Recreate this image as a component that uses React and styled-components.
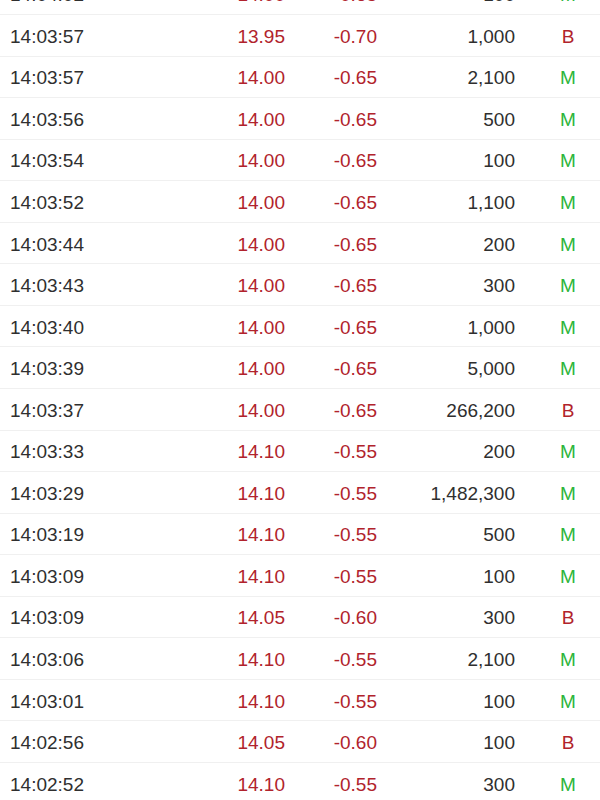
import React from "react";
import styled, { createGlobalStyle } from "styled-components";

const Global = createGlobalStyle`
  html, body { margin: 0; padding: 0; background: #fff; }
  body { overflow: hidden; font-family: "Liberation Sans", Arial, sans-serif; }
`;

const Viewport = styled.div`
  width: 600px;
  height: 800px;
  overflow: hidden;
  background: #fff;
`;

const List = styled.div`
  margin-top: -26.5px;
  display: flex;
  flex-direction: column;
`;

const Row = styled.div`
  box-sizing: border-box;
  height: 41.55px;
  display: grid;
  grid-template-columns: 1fr 90px 92px 138px 85px;
  align-items: center;
  padding-left: 10px;
  padding-top: 3px;
  border-bottom: 1px solid #f0f0f0;
  font-size: 19px;
  color: #2f2f2f;
`;

const Time = styled.div`
  text-align: left;
`;

const Num = styled.div`
  text-align: right;
  color: ${(p) => (p.$red ? "#b1232c" : "#2f2f2f")};
`;

const Type = styled.div`
  text-align: center;
  padding-left: 21px;
  color: ${(p) => (p.$t === "B" ? "#b1232c" : "#2cb53a")};
`;

const rows = [
  ["14:04:02", "14.00", "-0.65", "100", "M"],
  ["14:03:57", "13.95", "-0.70", "1,000", "B"],
  ["14:03:57", "14.00", "-0.65", "2,100", "M"],
  ["14:03:56", "14.00", "-0.65", "500", "M"],
  ["14:03:54", "14.00", "-0.65", "100", "M"],
  ["14:03:52", "14.00", "-0.65", "1,100", "M"],
  ["14:03:44", "14.00", "-0.65", "200", "M"],
  ["14:03:43", "14.00", "-0.65", "300", "M"],
  ["14:03:40", "14.00", "-0.65", "1,000", "M"],
  ["14:03:39", "14.00", "-0.65", "5,000", "M"],
  ["14:03:37", "14.00", "-0.65", "266,200", "B"],
  ["14:03:33", "14.10", "-0.55", "200", "M"],
  ["14:03:29", "14.10", "-0.55", "1,482,300", "M"],
  ["14:03:19", "14.10", "-0.55", "500", "M"],
  ["14:03:09", "14.10", "-0.55", "100", "M"],
  ["14:03:09", "14.05", "-0.60", "300", "B"],
  ["14:03:06", "14.10", "-0.55", "2,100", "M"],
  ["14:03:01", "14.10", "-0.55", "100", "M"],
  ["14:02:56", "14.05", "-0.60", "100", "B"],
  ["14:02:52", "14.10", "-0.55", "300", "M"],
];

export default function App() {
  return (
    <>
      <Global />
      <Viewport>
        <List>
          {rows.map((r, i) => (
            <Row key={i}>
              <Time>{r[0]}</Time>
              <Num $red>{r[1]}</Num>
              <Num $red>{r[2]}</Num>
              <Num>{r[3]}</Num>
              <Type $t={r[4]}>{r[4]}</Type>
            </Row>
          ))}
        </List>
      </Viewport>
    </>
  );
}
